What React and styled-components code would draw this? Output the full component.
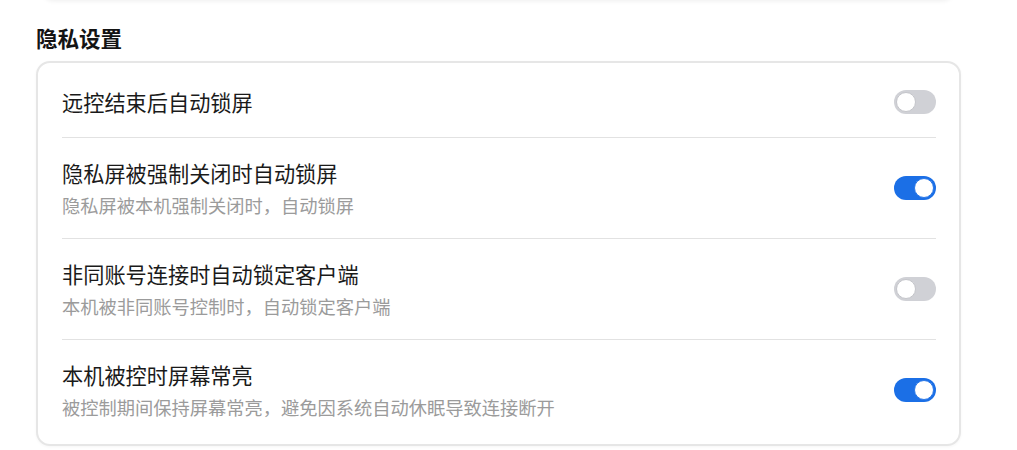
import React, { useState } from 'react'
import styled, { createGlobalStyle } from 'styled-components'

const GlobalStyle = createGlobalStyle`
    html, body {
        margin: 0;
        padding: 0;
        background: #fff;
        font-family: "Noto Sans CJK SC", "Noto Sans", sans-serif;
    }
`

const settings = [
    { title: '远控结束后自动锁屏', on: false },
    { title: '隐私屏被强制关闭时自动锁屏', desc: '隐私屏被本机强制关闭时，自动锁屏', on: true },
    { title: '非同账号连接时自动锁定客户端', desc: '本机被非同账号控制时，自动锁定客户端', on: false },
    { title: '本机被控时屏幕常亮', desc: '被控制期间保持屏幕常亮，避免因系统自动休眠导致连接断开', on: true },
]

const Toggle = ({ on, onClick }) => (
    <Switch $on={on} onClick={onClick}>
        <Knob $on={on} />
    </Switch>
)

const App = () => {
    const [values, setValues] = useState(settings.map(s => s.on))

    const flip = i => setValues(v => v.map((x, j) => (j === i ? !x : x)))

    return (
        <Page>
            <GlobalStyle />
            <PrevCard />
            <Section>
                <Heading>隐私设置</Heading>
                <Card>
                    {settings.map((s, i) => (
                        <Row key={s.title} $last={i === settings.length - 1}>
                            <TextCol>
                                <Title>{s.title}</Title>
                                {s.desc && <Desc>{s.desc}</Desc>}
                            </TextCol>
                            <Toggle on={values[i]} onClick={() => flip(i)} />
                        </Row>
                    ))}
                </Card>
            </Section>
        </Page>
    )
}

const Page = styled.div`
    width: 1017px;
    height: 450px;
    overflow: hidden;
    background: #fff;
`
const PrevCard = styled.div`
    height: 14px;
    margin: -14px 0 0 42px;
    width: 912px;
    background: #fff;
    border-radius: 0 0 12px 12px;
    box-shadow: 0 1px 5px rgba(0, 0, 0, 0.07);
`
const Section = styled.section`
    padding: 23px 0 0 36px;
    width: 925px;
`
const Heading = styled.h3`
    margin: 0 0 8px;
    font-size: 21.5px;
    line-height: 30px;
    font-weight: 700;
    color: #141414;
`
const Card = styled.div`
    border: 2px solid #e6e6e6;
    border-radius: 14px;
    padding: 4px 23px 4px 24px;
    background: #fff;
    box-shadow: 0 1px 3px rgba(0, 0, 0, 0.04);
`
const Row = styled.div`
    display: flex;
    align-items: center;
    justify-content: space-between;
    padding: 20px 0;
    border-bottom: ${p => (p.$last ? 'none' : '1px solid #e2e2e2')};
`
const TextCol = styled.div`
    display: flex;
    flex-direction: column;
`
const Title = styled.div`
    font-size: 21.2px;
    line-height: 30px;
    color: #1a1a1a;
`
const Desc = styled.div`
    margin-top: 4px;
    font-size: 18.25px;
    line-height: 26px;
    color: #9b9b9b;
`
const Switch = styled.div`
    flex: none;
    box-sizing: border-box;
    width: 42px;
    height: 24px;
    border-radius: 12px;
    padding: 2px;
    background: ${p => (p.$on ? '#1b6fe6' : '#d0d1d6')};
    display: flex;
    justify-content: ${p => (p.$on ? 'flex-end' : 'flex-start')};
    cursor: pointer;
`
const Knob = styled.div`
    box-sizing: border-box;
    width: 20px;
    height: 20px;
    border-radius: 50%;
    background: #fff;
    border: 1px solid ${p => (p.$on ? '#2a78e8' : '#c4c5ca')};
`

export default App
